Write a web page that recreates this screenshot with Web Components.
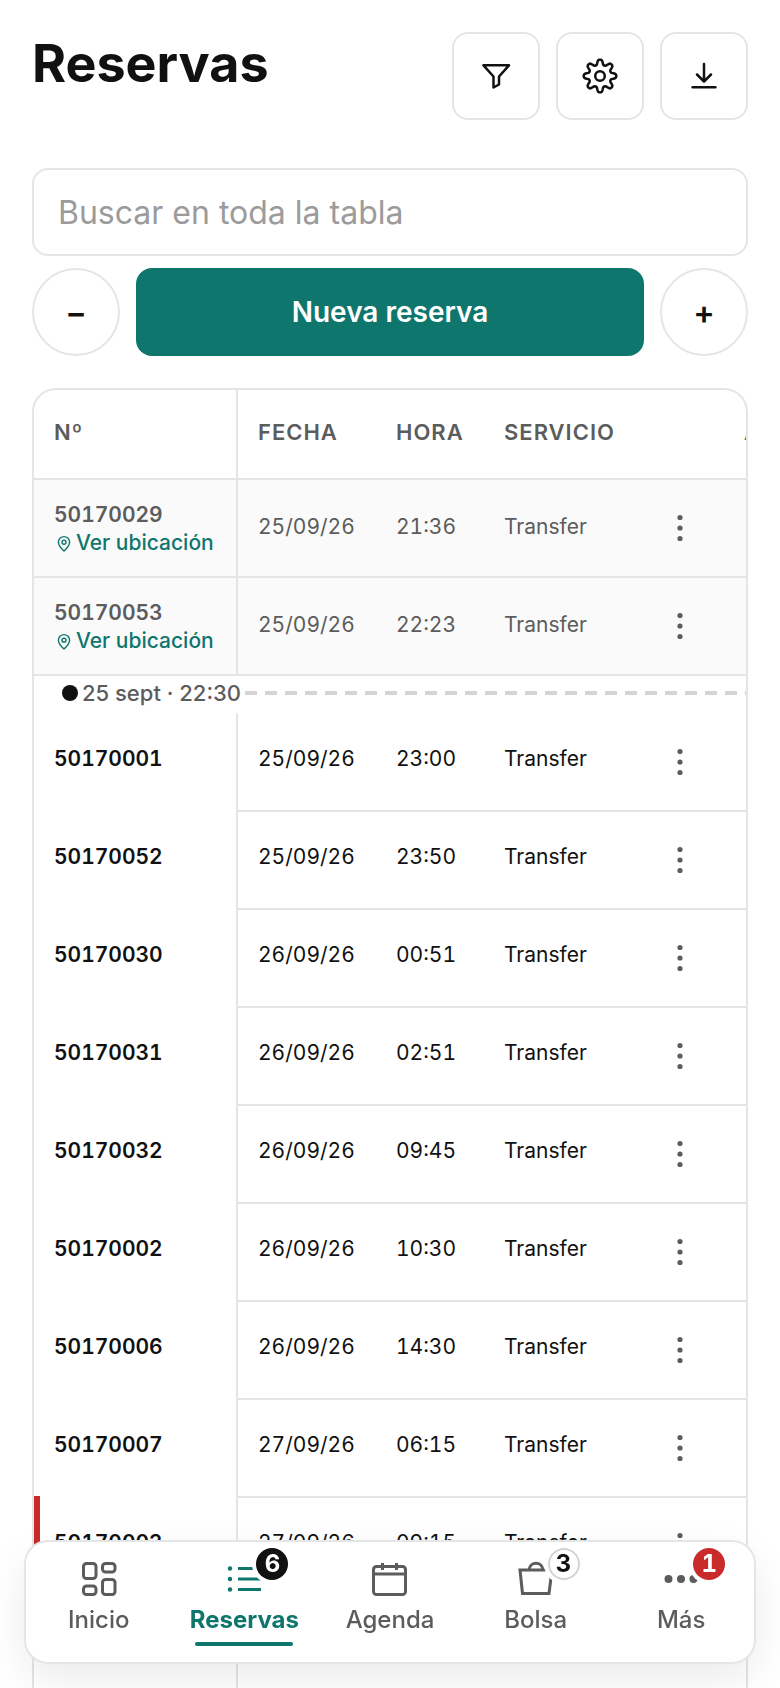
<!DOCTYPE html>
<html lang="es">
<head>
<meta charset="utf-8">
<meta name="viewport" content="width=device-width, initial-scale=1">
<title>Reservas</title>
<style>
  html, body {
    margin: 0;
    height: 100%;
  }
  body {
    overflow: hidden;
    background: #fff;
    color: #111;
    font-family: Inter, "Liberation Sans", sans-serif;
    --line: #e4e6e6;
    --muted: #5c5c5c;
    --brand: #0f766e;
    --danger: #c92a2a;
  }
</style>
</head>
<body>
<app-shell>
  <page-header slot="header" heading="Reservas">
    <icon-button icon="filter" label="Filtrar"></icon-button>
    <icon-button icon="gear" label="Ajustes"></icon-button>
    <icon-button icon="download" label="Descargar"></icon-button>
  </page-header>
  <table-toolbar></table-toolbar>
  <booking-table></booking-table>
  <bottom-nav slot="nav">
    <nav-item icon="grid">Inicio</nav-item>
    <nav-item icon="list" badge="6" tone="dark" active>Reservas</nav-item>
    <nav-item icon="calendar">Agenda</nav-item>
    <nav-item icon="bag" badge="3" tone="light">Bolsa</nav-item>
    <nav-item icon="more" badge="1" tone="red">Más</nav-item>
  </bottom-nav>
</app-shell>

<script>
const gearPath = (() => {
  // 8 rounded teeth around the centre
  const pts = [];
  for (let i = 0; i <= 96; i++) {
    const a = i / 96 * Math.PI * 2;
    const c = Math.cos(8 * a);
    const r = 13.8 + 2.5 * Math.tanh(1.6 * c) / Math.tanh(1.6);
    pts.push((18 + r * Math.sin(a)).toFixed(2) + ' ' + (18 - r * Math.cos(a)).toFixed(2));
  }
  return 'M' + pts.join('L') + 'Z';
})();

const icons = {
  filter: `<svg width="36" height="36" viewBox="0 0 36 36" fill="none" stroke="currentColor" stroke-width="2.5" stroke-linejoin="round"><path d="M5.5 7.3H31L21 18.5V26.5L15.5 29.5V18.5Z"/></svg>`,
  gear: `<svg width="36" height="36" viewBox="0 0 36 36" fill="none" stroke="currentColor" stroke-width="2.5" stroke-linejoin="round"><path d="${gearPath}"/><circle cx="18" cy="18" r="4.8"/></svg>`,
  download: `<svg width="36" height="36" viewBox="0 0 36 36" fill="none" stroke="currentColor" stroke-width="2.5" stroke-linecap="round" stroke-linejoin="round"><path d="M18 6V23M11 16.5L18 23.5L25 16.5M6.500 29.200H29.500"/></svg>`,
  grid: `<svg width="40" height="40" viewBox="0 0 40 40" fill="none" stroke="currentColor" stroke-width="3"><rect x="4.500" y="3.500" width="12.500" height="15" rx="3"/><rect x="23.500" y="3.500" width="12.500" height="8.500" rx="3"/><rect x="4.500" y="26" width="12.500" height="8.500" rx="3"/><rect x="23.500" y="19.500" width="12.500" height="15" rx="3"/></svg>`,
  list: `<svg width="40" height="40" viewBox="0 0 40 40" fill="none" stroke="currentColor" stroke-width="3"><path d="M14 8.500H37M14 19H37M14 29.500H37"/><g fill="currentColor" stroke="none"><circle cx="6" cy="8.500" r="2.200"/><circle cx="6" cy="19" r="2.200"/><circle cx="6" cy="29.500" r="2.200"/></g></svg>`,
  calendar: `<svg width="40" height="40" viewBox="0 0 40 40" fill="none" stroke="currentColor" stroke-width="3"><rect x="3.500" y="6.500" width="32" height="28" rx="3"/><path d="M3.500 14H35.500M12.500 3V10M26.500 3V10"/></svg>`,
  bag: `<svg width="40" height="40" viewBox="0 0 40 40" fill="none" stroke="currentColor" stroke-width="3"><path d="M4 10H36L33 33.500H6.500ZM13 10C14 1 26 1 27 10"/></svg>`,
  more: `<svg width="40" height="40" viewBox="0 0 40 40" fill="currentColor"><circle cx="7.500" cy="19" r="4"/><circle cx="20" cy="19" r="4"/><circle cx="32.500" cy="19" r="4"/></svg>`,
  dots: `<svg width="32" height="32" viewBox="0 0 32 32" fill="currentColor"><circle cx="16" cy="5.500" r="2.600"/><circle cx="16" cy="16" r="2.600"/><circle cx="16" cy="26.500" r="2.600"/></svg>`,
  pin: `<svg width="18" height="18" viewBox="-1 -1 18 18" fill="none" stroke="currentColor" stroke-width="1.400"><path d="M9 16C5 12.300 3.400 9.800 3.400 7.200A5.600 5.600 0 0 1 14.600 7.200C14.600 9.800 13 12.300 9 16Z"/><circle cx="9" cy="7.200" r="2"/></svg>`
};

class BaseElement extends HTMLElement {
  constructor() {
    super();
    this.attachShadow({ mode: 'open' });
  }
  connectedCallback() {
    const template = document.createElement('template');
    template.innerHTML = `<style>${this.getStyles()}</style>${this.getTemplate()}`;
    this.shadowRoot.replaceChildren(template.content.cloneNode(true));
  }
}

class AppShell extends BaseElement {
  getTemplate() {
    return `
      <main>
        <slot name="header"></slot>
        <slot></slot>
      </main>
      <slot name="nav"></slot>
    `;
  }
  getStyles() {
    return `
      :host { display: block; }
      main { padding: 32px; }
    `;
  }
}
customElements.define('app-shell', AppShell);

class PageHeader extends BaseElement {
  getTemplate() {
    return `
      <h1>${this.getAttribute('heading')}</h1>
      <div class="actions"><slot></slot></div>
    `;
  }
  getStyles() {
    return `
      :host { display: flex; justify-content: space-between; align-items: flex-start; margin-bottom: 48px; }
      h1 { margin: 0; font-size: 52px; line-height: 64px; font-weight: 700; }
      .actions { display: flex; gap: 16px; }
    `;
  }
}
customElements.define('page-header', PageHeader);

class IconButton extends BaseElement {
  getTemplate() {
    return `<button type="button" aria-label="${this.getAttribute('label')}">${icons[this.getAttribute('icon')]}</button>`;
  }
  getStyles() {
    return `
      :host { display: block; }
      button {
        display: grid;
        place-items: center;
        box-sizing: border-box;
        width: 88px;
        height: 88px;
        padding: 0;
        border: 2px solid var(--line);
        border-radius: 16px;
        background: #fff;
        color: inherit;
      }
    `;
  }
}
customElements.define('icon-button', IconButton);

class TableToolbar extends BaseElement {
  getTemplate() {
    return `
      <input type="search" placeholder="Buscar en toda la tabla" aria-label="Buscar en toda la tabla">
      <div class="row">
        <button type="button" class="round">−</button>
        <button type="button" class="primary">Nueva reserva</button>
        <button type="button" class="round">+</button>
      </div>
    `;
  }
  getStyles() {
    return `
      :host { display: flex; flex-direction: column; gap: 12px; margin-bottom: 32px; }
      input, button {
        box-sizing: border-box;
        height: 88px;
        border: 2px solid var(--line);
        background: #fff;
        color: inherit;
        font-family: inherit;
      }
      input { width: 100%; padding: 0 24px; border-radius: 16px; font-size: 32px; }
      input::placeholder { color: #9b9b9b; opacity: 1; }
      .row { display: flex; gap: 16px; }
      .round { width: 88px; padding: 0; border-radius: 50%; font-size: 32px; font-weight: 600; }
      .primary {
        flex: 1;
        border: 0;
        border-radius: 16px;
        background: var(--brand);
        color: #fff;
        font-size: 28px;
        font-weight: 600;
      }
    `;
  }
}
customElements.define('table-toolbar', TableToolbar);

class BookingTable extends BaseElement {
  get rows() {
    return [
      ['50170029', '25/09/26', '21:36', 'past'],
      ['50170053', '25/09/26', '22:23', 'past'],
      null, // current time
      ['50170001', '25/09/26', '23:00'],
      ['50170052', '25/09/26', '23:50'],
      ['50170030', '26/09/26', '00:51'],
      ['50170031', '26/09/26', '02:51'],
      ['50170032', '26/09/26', '09:45'],
      ['50170002', '26/09/26', '10:30'],
      ['50170006', '26/09/26', '14:30'],
      ['50170007', '27/09/26', '06:15'],
      ['50170003', '27/09/26', '09:15', 'alert'],
      ['', '', '', 'empty'],
      ['', '', '', 'empty']
    ];
  }
  getRow(row) {
    if (!row) {
      return `<tr class="now"><td colspan="6"><div><i></i><span>25 sept · 22:30</span><b></b></div></td></tr>`;
    }
    const [id, date, time, state = ''] = row;
    const link = state === 'past' ? `<a href="#mapa">${icons.pin}Ver ubicación</a>` : '';
    const menu = id ? `<button type="button" aria-label="Acciones ${id}">${icons.dots}</button>` : '';
    return `
      <tr class="${state}">
        <th scope="row">${id}${link}</th>
        <td>${date}</td>
        <td>${time}</td>
        <td>${id ? 'Transfer' : ''}</td>
        <td class="menu">${menu}</td>
        <td></td>
      </tr>`;
  }
  getTemplate() {
    return `
      <table>
        <colgroup><col class="id"><col class="date"><col class="time"><col class="kind"><col class="act"><col></colgroup>
        <thead><tr><th>Nº</th><th>FECHA</th><th>HORA</th><th>SERVICIO</th><th></th><th>A</th></tr></thead>
        <tbody>${this.rows.map(r => this.getRow(r)).join('')}</tbody>
      </table>
    `;
  }
  getStyles() {
    return `
      :host {
        display: block;
        overflow: hidden;
        border: 2px solid var(--line);
        border-radius: 24px;
      }
      table {
        table-layout: fixed;
        width: calc(100% + 120px);
        border-spacing: 0;
        font-size: 21px;
        line-height: 28px;
        font-variant-numeric: tabular-nums;
      }
      .id { width: 202px; }
      .date { width: 140px; }
      .time { width: 108px; }
      .kind { width: 152px; }
      .act { width: 88px; }
      th, td {
        box-sizing: border-box;
        height: 98px;
        padding: 31px 0 0 20px;
        border-top: 2px solid var(--line);
        text-align: left;
        vertical-align: top;
        white-space: nowrap;
      }
      th { font-weight: 600; }
      tr > :nth-child(2) { border-left: 2px solid var(--line); }
      thead th {
        height: 88px;
        padding-top: 28px;
        border-top: 0;
        color: var(--muted);
        font-size: 22px;
        letter-spacing: 1px;
      }
      .past { background: #fafafa; color: var(--muted); }
      .past th { padding-top: 21px; }
      .past td { padding-top: 33px; }
      tr .menu { padding: 32px 0 0; text-align: center; }
      button { padding: 0; border: 0; background: none; color: var(--muted); }
      svg { display: block; }
      a {
        display: flex;
        align-items: center;
        gap: 4px;
        color: var(--brand);
        font-weight: 500;
        text-decoration: none;
      }
      tr:not(.past) > th[scope] { border-top-color: transparent; }
      .now td { height: 38px; padding: 0; font-size: 22px; font-variant-numeric: normal; }
      .now div { display: flex; align-items: center; padding: 3px 0 0 28px; color: var(--muted); font-weight: 500; }
      .now i { width: 16px; height: 16px; margin-right: 4px; border-radius: 50%; background: #111; }
      .now b {
        flex: 1;
        height: 4px;
        margin-left: 4px;
        background: repeating-linear-gradient(90deg, #d4d4d4 0 12px, transparent 12px 20px);
      }
      .now + tr > * { border-top-color: #fff; }
      .alert th { background: linear-gradient(90deg, var(--danger) 6px, transparent 6px) border-box; }
    `;
  }
}
customElements.define('booking-table', BookingTable);

class BottomNav extends BaseElement {
  getTemplate() {
    return `<nav aria-label="Principal"><slot></slot></nav>`;
  }
  getStyles() {
    return `
      :host { position: fixed; left: 24px; right: 24px; bottom: 24px; }
      nav {
        display: grid;
        grid-template-columns: repeat(5, 1fr);
        box-sizing: border-box;
        height: 124px;
        border: 2px solid var(--line);
        border-radius: 24px;
        background: #fff;
        box-shadow: 0 16px 40px rgba(0, 0, 0, 0.08);
      }
    `;
  }
}
customElements.define('bottom-nav', BottomNav);

class NavItem extends BaseElement {
  getTemplate() {
    const badge = this.getAttribute('badge');
    return `
      <a href="#">
        <span class="icon">${icons[this.getAttribute('icon')]}${badge ? `<em>${badge}</em>` : ''}</span>
        <span class="label"><slot></slot></span>
      </a>
    `;
  }
  getStyles() {
    return `
      :host { display: block; }
      a {
        display: flex;
        flex-direction: column;
        align-items: center;
        padding-top: 18px;
        color: var(--muted);
        font-size: 24px;
        line-height: 30px;
        font-weight: 500;
        text-decoration: none;
      }
      svg { display: block; }
      .icon { position: relative; }
      .label { padding: 5px 0 7px; }
      em {
        position: absolute;
        left: 32px;
        top: -12px;
        box-sizing: border-box;
        width: 32px;
        height: 32px;
        border-radius: 50%;
        box-shadow: 0 0 0 4px #fff;
        color: #fff;
        font-size: 24px;
        line-height: 32px;
        font-style: normal;
        font-weight: 700;
        font-variant-numeric: tabular-nums;
        text-align: center;
      }
      :host([tone=dark]) em { background: #111; }
      :host([tone=red]) em { background: var(--danger); }
      :host([tone=light]) em { background: #fff; color: #111; border: 2px solid #d4d4d4; line-height: 28px; }
      :host([active]) a { color: var(--brand); font-weight: 700; }
      :host([active]) a::after {
        content: "";
        width: 98px;
        height: 4px;
        border-radius: 2px;
        background: currentColor;
      }
    `;
  }
}
customElements.define('nav-item', NavItem);
</script>
</body>
</html>
